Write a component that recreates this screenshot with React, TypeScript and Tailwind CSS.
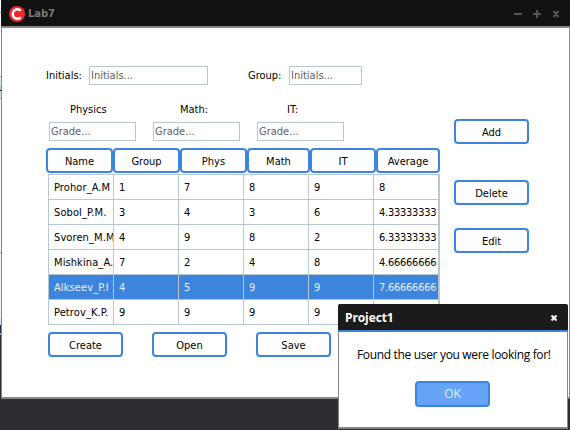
import React from "react";

const rows = [
  ["Prohor_A.M", "1", "7", "8", "9", "8"],
  ["Sobol_P.M.", "3", "4", "3", "6", "4.33333333"],
  ["Svoren_M.M", "4", "9", "8", "2", "6.33333333"],
  ["Mishkina_A.", "7", "2", "4", "8", "4.66666666"],
  ["Alkseev_P.I", "4", "5", "9", "9", "7.66666666"],
  ["Petrov_K.P.", "9", "9", "9", "9", ""],
];

function Button({ className = "w-[75px]", children }: { className?: string; children: React.ReactNode }) {
  return (
    <button
      className={`flex h-[25px] shrink-0 items-center justify-center rounded-[4px] border-2 border-[#3d84dc] bg-white pt-px leading-none ${className}`}
    >
      {children}
    </button>
  );
}

function Field({ className = "w-[87px]", children }: { className?: string; children: React.ReactNode }) {
  return (
    <div
      className={`h-[19px] shrink-0 border border-[#b6c6d2] bg-white pl-px leading-[17px] text-[#606060] ${className}`}
    >
      {children}
    </div>
  );
}

function DesktopEdge() {
  return (
    <div className="flex h-[430px] w-px shrink-0 flex-col">
      <div className="h-3 bg-white" />
      <div className="h-px bg-[#888888]" />
      <div className="h-[63px] bg-white" />
      <div className="h-px bg-[#a0a0a0]" />
      <div className="h-2 bg-[#e8e8e8]" />
      <div className="h-[5px] bg-[#9fe0e6]" />
      <div className="h-px bg-black" />
      <div className="h-[7px] bg-[#e0e0e0]" />
      <div className="h-px bg-[#a0a0a0]" />
      <div className="h-[153px] bg-[#f6f6f6]" />
      <div className="h-px bg-[#a0a0a0]" />
      <div className="h-[66px] bg-[#f2f2f2]" />
      <div className="h-[6px] bg-[#c4dcf8]" />
      <div className="h-[8px] bg-[#2d2e32]" />
      <div className="h-[2px] bg-[#6aa6ee]" />
      <div className="grow bg-[#2d2e32]" />
    </div>
  );
}

function MainWindow() {
  return (
    <div className="flex h-[399px] w-[569px] shrink-0 flex-col bg-white">
      <div className="flex h-[26px] items-center bg-[#111111]">
        <svg className="mt-0.5 ml-2" width="16" height="16" viewBox="0 0 16 16">
          <circle cx="8" cy="8" r="8" fill="#f02733" />
          <path d="M11.8 4.8A4.7 4.7 0 1 0 11.8 11.2" fill="none" stroke="#fff" strokeWidth="2.4" />
        </svg>
        <span className="mt-0.5 ml-[3px] grow text-[11px] font-bold text-[#787878]">Lab7</span>
        <svg width="56" height="26" viewBox="0 0 56 26" fill="none" stroke="#565656" strokeWidth="2">
          <path d="M0 14H8M19 14H27M23 10V18M39.5 11L44.5 17M44.5 11L39.5 17" />
        </svg>
      </div>
      <div className="grow border-x border-t-2 border-b-2 border-[#868686] pt-[38px] pl-11">
        <div className="flex h-[19px] items-center">
          <span className="w-[43px] pt-px">Initials:</span>
          <Field className="w-[119px]">Initials...</Field>
          <span className="ml-10 w-[41px] pt-px">Group:</span>
          <Field className="w-[73px]">Initials...</Field>
        </div>
        <div className="mt-[17px] flex h-4 items-center">
          <span className="ml-6 w-[110px]">Physics</span>
          <span className="w-[107px]">Math:</span>
          <span>IT:</span>
        </div>
        <div className="flex h-[258px]">
          <div className="w-[394px] shrink-0">
            <div className="mt-1 ml-[3px] flex gap-[17px]">
              <Field>Grade...</Field>
              <Field>Grade...</Field>
              <Field>Grade...</Field>
            </div>
            <div className="mt-[7px] flex">
              <Button className="w-[67px]">Name</Button>
              <Button className="w-[67px]">Group</Button>
              <Button className="w-[67px]">Phys</Button>
              <Button className="w-[63px]">Math</Button>
              <Button className="w-[66px]">IT</Button>
              <Button className="w-[64px]">Average</Button>
            </div>
            <div className="mt-px ml-0.5 w-[392px] border-t border-r border-l border-[#b6c6d2]">
              {rows.map((row, i) => (
                <div
                  key={row[0]}
                  className={`flex h-[25px] border-b border-[#b6c6d2] ${i === 4 ? "bg-[#3d84dc] text-[#e8f2ff]" : ""}`}
                >
                  {row.map((cell, j) => (
                    <div
                      key={j}
                      className={`w-[65px] shrink-0 overflow-hidden border-r border-[#b6c6d2] pt-px pl-[5px] leading-6 whitespace-nowrap ${j === 0 ? "tracking-[0.1px]" : "tracking-[-0.25px]"}`}
                    >
                      {cell}
                    </div>
                  ))}
                </div>
              ))}
            </div>
            <div className="mt-[7px] ml-0.5 flex gap-[29px]">
              <Button>Create</Button>
              <Button>Open</Button>
              <Button>Save</Button>
            </div>
          </div>
          <div className="ml-3.5 flex flex-col pt-px">
            <Button>Add</Button>
            <Button className="mt-9 w-[75px]">Delete</Button>
            <Button className="mt-[23px] w-[75px]">Edit</Button>
          </div>
        </div>
      </div>
    </div>
  );
}

function MessageDialog() {
  return (
    <div className="absolute top-[304px] left-[338px] flex h-[125px] w-[230px] flex-col rounded-t-[2px] bg-white font-['Open_Sans','Noto_Sans',sans-serif] [font-stretch:normal]">
      <div className="flex h-7 items-center justify-between rounded-t-[2px] border-b-2 border-[#3d84dc] bg-[#1b1b1b] pt-px pr-[10px] pl-[7px]">
        <span className="text-[12px] font-bold tracking-[-0.1px] text-white">Project1</span>
        <svg width="8" height="8" viewBox="0 0 8 8" stroke="#fff" strokeWidth="2">
          <path d="M1.5 1.5L6.5 6.5M6.5 1.5L1.5 6.5" />
        </svg>
      </div>
      <div className="flex grow flex-col border-x border-b-2 border-[#868686] pt-[15px] pl-[18px]">
        <span className="text-[12px] leading-4 tracking-[-0.33px] whitespace-nowrap">Found the user you were looking for!</span>
        <button className="mt-[18px] ml-[58px] flex h-[26px] w-[75px] items-center justify-center rounded-[4px] border-2 border-[#3d84dc] bg-[#64a3f5] text-[12px] text-[#e8f2ff]">
          OK
        </button>
      </div>
    </div>
  );
}

export default function App() {
  return (
    <div className="relative flex h-[430px] w-[570px] overflow-hidden bg-[#2d2e32] font-['DejaVu_Sans_Condensed','DejaVu_Sans',sans-serif] text-[11px] text-black [font-stretch:condensed]">
      <DesktopEdge />
      <MainWindow />
      <MessageDialog />
    </div>
  );
}
